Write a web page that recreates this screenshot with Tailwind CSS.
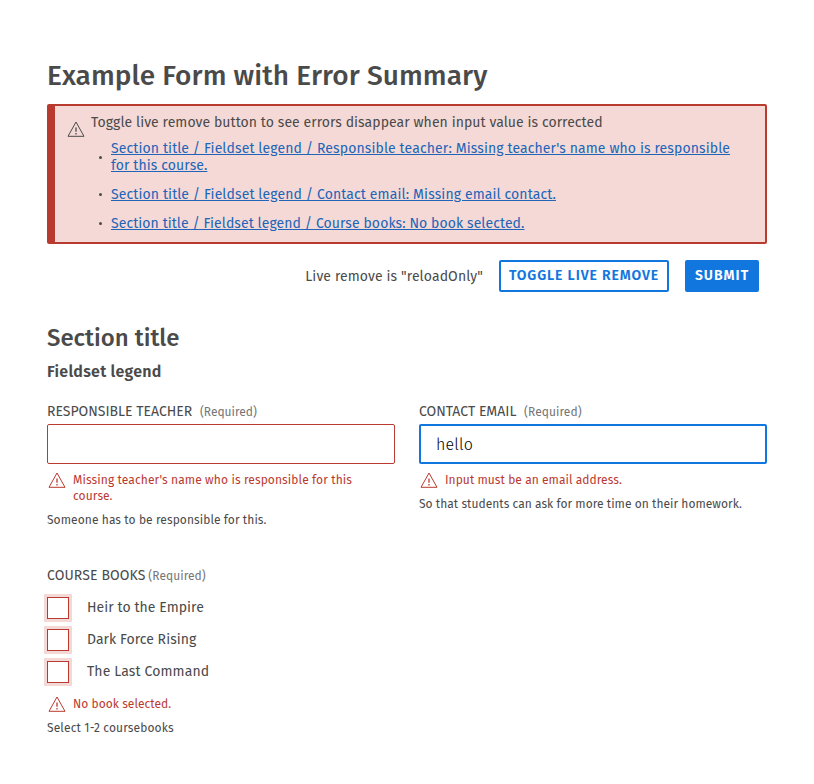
<!DOCTYPE html>
<html lang="en">
<head>
<meta charset="utf-8">
<title>Example Form with Error Summary</title>
<script src="https://cdn.jsdelivr.net/npm/@tailwindcss/browser@4"></script>
</head>
<body class="bg-white px-[47px] pt-[60px] font-['Fira_Sans','Open_Sans',sans-serif] text-[14px] leading-4 text-[#4a4a4a]">
<svg class="hidden">
  <symbol id="warning" viewBox="0 0 18 16">
    <path d="M9 1 17 15.3H1Z" fill="none" stroke="currentColor" stroke-linejoin="round"/>
    <path d="M9 6.5v4.2" fill="none" stroke="currentColor" stroke-width="1.3"/>
    <path d="M9 12v1.4" fill="none" stroke="currentColor" stroke-width="1.3"/>
  </symbol>
</svg>
<main class="w-[720px]">
  <h1 class="text-[28px] leading-8 font-medium tracking-[0.08px]">Example Form with Error Summary</h1>

  <section class="mt-3 flex h-[140px] rounded-[2px] border-2 border-l-8 border-[#b93a2f] bg-[#f5d9d6] pt-2 pl-3">
    <svg class="mt-[7px] h-4 w-[18px] shrink-0"><use href="#warning"/></svg>
    <div class="ml-[6px]">
      <p class="pt-px tracking-[0.066px]">Toggle live remove button to see errors disappear when input value is corrected</p>
      <ul class="mt-[9px] space-y-3 leading-[17px] text-[#2065b8]">
        <li class="flex items-center"><span class="mr-[9px] ml-2 size-[3px] shrink-0 rounded-full bg-[#4a4a4a]"></span><a class="w-[632px] tracking-[0.11px] underline">Section title / Fieldset legend / Responsible teacher: Missing teacher's name who is responsible for this course.</a></li>
        <li class="flex items-center"><span class="mr-[9px] ml-2 size-[3px] shrink-0 rounded-full bg-[#4a4a4a]"></span><a class="tracking-[0.11px] underline">Section title / Fieldset legend / Contact email: Missing email contact.</a></li>
        <li class="flex items-center"><span class="mr-[9px] ml-2 size-[3px] shrink-0 rounded-full bg-[#4a4a4a]"></span><a class="tracking-[0.08px] underline">Section title / Fieldset legend / Course books: No book selected.</a></li>
      </ul>
    </div>
  </section>

  <div class="mt-4 flex items-center justify-end gap-4 pr-2">
    <span class="pt-[2px] tracking-[0.11px]">Live remove is "reloadOnly"</span>
    <button class="h-8 w-[170px] rounded-[2px] border-2 border-[#1177de] pb-px font-semibold tracking-[0.88px] whitespace-nowrap text-[#1177de]">TOGGLE LIVE REMOVE</button>
    <button class="h-8 w-[74px] rounded-[2px] bg-[#1177de] pb-px font-semibold tracking-[1px] text-white">SUBMIT</button>
  </div>

  <h2 class="mt-8 text-[24px] leading-7 font-medium">Section title</h2>
  <h3 class="mt-2 text-[16px] leading-6 font-semibold tracking-[0.25px]">Fieldset legend</h3>

  <div class="mt-5 grid grid-cols-2 gap-6">
    <div>
      <label class="block">RESPONSIBLE TEACHER <span class="ml-1 text-[12px] text-[#757575]">(Required)</span></label>
      <div class="mt-1 h-10 rounded-[2px] border border-[#b93a2f]"></div>
      <p class="mt-2 flex text-[12px] text-[#b93a2f]"><svg class="mx-px mr-[7px] h-4 w-[18px] shrink-0"><use href="#warning"/></svg><span class="w-[300px] tracking-[0.11px]">Missing teacher's name who is responsible for this course.</span></p>
      <p class="mt-2 text-[12px] tracking-[0.08px]">Someone has to be responsible for this.</p>
    </div>
    <div>
      <label class="block">CONTACT EMAIL <span class="ml-1 text-[12px] tracking-[0.06px] text-[#757575]">(Required)</span></label>
      <div class="mt-1 flex h-10 items-center rounded-[2px] border-2 border-[#1177de] pt-[2px] pl-[15px] text-[16px] font-light tracking-[0.2px] text-black">hello</div>
      <p class="mt-2 flex text-[12px] text-[#b93a2f]"><svg class="mx-px mr-[7px] h-4 w-[18px] shrink-0"><use href="#warning"/></svg><span class="tracking-[0.05px]">Input must be an email address.</span></p>
      <p class="mt-2 text-[12px] tracking-[0.035px]">So that students can ask for more time on their homework.</p>
    </div>
  </div>

  <div class="mt-10">
    <p class="tracking-[0.1px]">COURSE BOOKS <span class="-ml-px text-[12px] tracking-[0.05px] text-[#757575]">(Required)</span></p>
    <div class="mt-[13px] space-y-[10px]">
      <div class="flex"><span class="size-[22px] border border-[#b93a2f] bg-white ring-3 ring-[#f5d9d6]"></span><span class="ml-[18px] pt-[3px] tracking-[0.06px]">Heir to the Empire</span></div>
      <div class="flex"><span class="size-[22px] border border-[#b93a2f] bg-white ring-3 ring-[#f5d9d6]"></span><span class="ml-[18px] pt-[3px] tracking-[0.05px]">Dark Force Rising</span></div>
      <div class="flex"><span class="size-[22px] border border-[#b93a2f] bg-white ring-3 ring-[#f5d9d6]"></span><span class="ml-[18px] pt-[3px] tracking-[0.12px]">The Last Command</span></div>
    </div>
    <p class="mt-[13px] flex text-[12px] text-[#b93a2f]"><svg class="mx-px mr-[7px] h-4 w-[18px] shrink-0"><use href="#warning"/></svg><span class="tracking-[0.04px]">No book selected.</span></p>
    <p class="mt-2 text-[12px] tracking-[0.14px]">Select 1-2 coursebooks</p>
  </div>
</main>
</body>
</html>
